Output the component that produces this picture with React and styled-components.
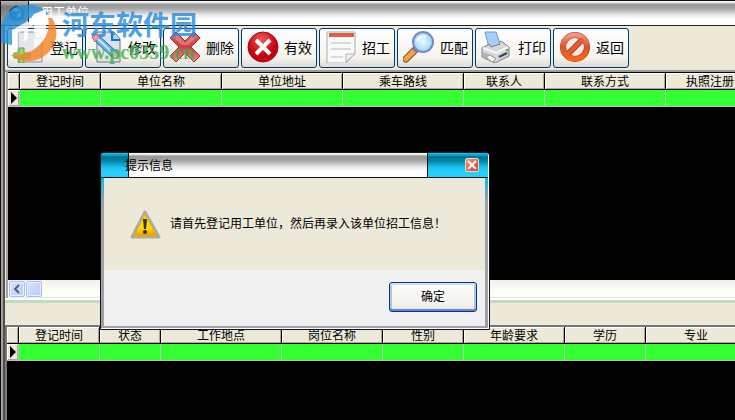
import React from "react";
import styled, { createGlobalStyle, css } from "styled-components";

const Global = createGlobalStyle`
  * { box-sizing: border-box; }
  body {
    margin: 0;
    background: #000;
    color: #000;
    font: 12px/16px "Noto Sans CJK SC", sans-serif;
  }
  button { font: inherit; color: inherit; padding: 0; margin: 0; }
`;

const chrome = "linear-gradient(#fff 0, #ddd 2px, #999 3px, #a0a0a0 7px, #e8e8e8 14px, #fff 18px, #fff 100%)";
const aqua = "linear-gradient(#00cfff 0, #00a8d0 2px, #00708e 4px, #0087aa 8px, #20c4f4 15px, #24d0ff 19px, #24d0ff 100%)";

const Window = styled.div`
  position: relative;
  display: flex;
  flex-direction: column;
  min-height: 100vh;
  overflow: hidden;
  border-top: 1px solid #110b10;
  border-left: 1px solid #110b10;
`;

const TitleBar = styled.header`
  display: flex;
  flex: none;
  height: 25px;
  background: ${chrome};
  border-bottom: 1px solid #222;
`;

const AppIcon = styled.div`
  display: flex;
  align-items: center;
  justify-content: flex-end;
  width: 28px;
  padding-right: 3px;
  background: linear-gradient(#bbb, #777 6px, #aaa);
  border-right: 1px solid #111;
`;

const WindowTitle = styled.h1`
  margin: 0;
  padding: 3px 0 0 12px;
  color: #fff;
  font-size: 12px;
  font-weight: 400;
`;

const Body = styled.div`
  display: flex;
  flex: 1;
  flex-direction: column;
  min-width: 0;
  border-left: 4px ridge #a6a2a0;
  background: #ece9d8;
`;

const Toolbar = styled.nav`
  display: flex;
  flex: none;
  gap: 2px;
  height: 46px;
  padding: 2px 2px;
  border-bottom: 2px solid #9c9a98;
  overflow: hidden;
`;

const ToolButton = styled.button`
  display: flex;
  flex: none;
  align-items: center;
  gap: 5px;
  width: 76px;
  height: 40px;
  padding: 0 0 2px 5px;
  border: 1px solid #003c74;
  border-radius: 3px;
  background: linear-gradient(#fff, #f4f3ee 75%, #dedbd0);
  font-size: 14px;
  white-space: nowrap;

  svg { width: 32px; height: 32px; flex: none; }
`;

const Pane = styled.section`
  display: flex;
  flex-direction: column;
  overflow: hidden;
  background: #000;
  ${(p) => p.$upper
    ? css`flex: none; height: 226px; padding-top: 1px; border-left: 2px solid #a6a2a0; margin-left: 1px;`
    : css`flex: 1; border-top: 2px solid #77747a; border-left: 2px solid #777;`}
`;

const Grid = styled.table`
  flex: none;
  width: ${(p) => p.$width}px;
  table-layout: fixed;
  border-collapse: separate;
  border-spacing: 0;

  th {
    height: 17px;
    padding: 0;
    overflow: hidden;
    background: #ece9d8;
    border-right: 1px solid #000;
    border-bottom: 1px solid #000;
    box-shadow: inset 1px 1px #fff, inset -1px -1px #aca899;
    font-weight: 400;
    line-height: 16px;
    white-space: nowrap;
  }

  td {
    height: 17px;
    padding: 0;
    background: #33ff33;
    border-right: 1px solid #c0c0c0;
    border-bottom: 1px solid #c0c0c0;
  }

  td:first-child {
    background: #ece9d8;
    box-shadow: inset 1px 1px #fff, inset -1px -1px #aca899;
  }
`;

const RowMarker = styled.svg`
  display: block;
  width: 6px;
  height: 12px;
  margin-left: 3px;
`;

const ScrollBar = styled.div`
  display: flex;
  flex: none;
  gap: 1px;
  height: 18px;
  margin-top: auto;
  padding: 1px;
  background: linear-gradient(#f2f0eb, #fefefb 65%, #fff 90%, #ddd);
`;

const ScrollPart = styled.button`
  display: grid;
  place-items: center;
  width: 16px;
  height: 16px;
  border: 1px solid #a9c0ef;
  border-radius: 2px;
  background: linear-gradient(135deg, #d6e2ff, #b8ccf9);
  box-shadow: inset 0 0 0 1px #e6edff;
`;

const Splitter = styled.div`
  flex: none;
  height: 27px;
  border-top: 2px solid #fff;
  background: linear-gradient(#c0dcc0 3px, #ece9d8 3px);
`;

const Dialog = styled.section`
  position: absolute;
  top: 152px;
  left: 100px;
  width: 388px;
  border-radius: 2px 2px 0 0;
  background: linear-gradient(#00cfff 0, #00bfe8 24px, #a0a0a6 50px, #a0a0a6 100%);
  border-right: 1px solid #fff;
  border-bottom: 1px solid #fff;
  outline: 1px solid #16131a;
`;

const DialogTitle = styled.header`
  display: flex;
  height: 25px;
  border-bottom: 1px solid #111;
  background: ${aqua};

  h2 {
    flex: 1;
    margin: 0 0 0 27px;
    border: solid #111;
    border-width: 0 1px;
    background: ${chrome};
    font-size: 12px;
    font-weight: 400;
    line-height: 24px;
    text-indent: -4px;
  }
`;

const CloseArea = styled.div`
  display: flex;
  align-items: center;
  justify-content: flex-end;
  width: 60px;
  padding-right: 9px;
`;

const CloseButton = styled.button`
  display: grid;
  place-items: center;
  width: 14px;
  height: 14px;
  border: 1px solid #f5d7cc;
  border-radius: 2px;
  background: linear-gradient(135deg, #f09478, #d93c18);
`;

const Message = styled.div`
  display: flex;
  align-items: center;
  gap: 9px;
  height: 92px;
  margin: 0 3px;
  padding-left: 26px;
  background: #ece9d8;

  svg { width: 31px; height: 30px; flex: none; }
  p { margin: 0; line-height: 20px; padding-bottom: 2px; }
`;

const Actions = styled.footer`
  display: flex;
  justify-content: flex-end;
  height: 56px;
  margin: 0 3px 2px;
  padding: 12px 8px 14px;
  background: #f0f0f0;
`;

const OkButton = styled.button`
  width: 88px;
  height: 30px;
  padding-bottom: 2px;
  border: 1px solid #003c74;
  border-radius: 3px;
  background: linear-gradient(#fdfdfc, #f3f3ef 70%, #eae8e0);
  box-shadow: inset 0 2px #cee0fb, inset 0 -2px #6982ee, inset 2px 0 #a9c2f0, inset -2px 0 #a9c2f0;
`;

const Watermark = styled.aside`
  position: absolute;
  top: 4px;
  left: 0;
  display: flex;
  gap: 4px;
  pointer-events: none;
  opacity: 0.8;

  svg { width: 57px; height: 57px; }
`;

const MarkText = styled.div`
  display: flex;
  flex-direction: column;
  color: #258bdc;
  font-size: 27px;
  font-weight: 700;
  line-height: 32px;
  padding-top: 3px;
  white-space: nowrap;

  span {
    color: #3fae49;
    font: bold 20px/24px "Liberation Serif", serif;
  }
`;

const Page = () => (
  <>
    <path d="M5 1h17l7 6v24H5z" fill="#e4e6e9" stroke="#89919b" />
    <path d="M22 1v6h7" fill="#fff" stroke="#2e7cc4" />
  </>
);

const icons = {
  add: (
    <>
      <Page />
      <path d="M6 17h5v5h6v5h-6v5H6v-5H1v-5h5z" fill="#9cd66d" stroke="#5ba234" />
    </>
  ),
  edit: (
    <>
      <path d="M6 1h17l6 7v23H6z" fill="#dfe2e6" stroke="#69727e" />
      <path d="M21 1v8h8" fill="#a8daff" stroke="#1676c5" strokeWidth="2" />
      <path d="M2 8l5-4 20 18v5l-6-1z" fill="#68b3ee" stroke="#2165a5" />
      <path d="M1 6q0-3 4-3l4 3-5 5z" fill="#ef9e9e" stroke="#b75b63" />
      <path d="M21 26l5-4 2 6z" fill="#f4c06c" />
      <path d="M7 8l16 15" stroke="#c4e7ff" strokeWidth="2" />
    </>
  ),
  remove: (
    <>
      <path d="M7 1l9 9 9-9 6 6-9 9 9 9-6 6-9-9-9 9-6-6 9-9-9-9z" fill="url(#rose)" stroke="#a82c36" strokeLinejoin="round" />
      <path d="M7 3l9 9 9-9 3 3-9 8H13L4 6z" fill="#fff" opacity=".25" />
    </>
  ),
  valid: (
    <>
      <circle cx="16" cy="16" r="15" fill="url(#red)" stroke="#a40712" />
      <path d="M9 9l14 14M23 9L9 23" stroke="#fff" strokeWidth="4" />
    </>
  ),
  recruit: (
    <>
      <path d="M2 1h28v22l-9 9H2z" fill="#fafafa" stroke="#aaada8" />
      <path d="M4 2h25v4H4z" fill="#e2603c" />
      <path d="M6 12h20M6 18h20M6 26h12" stroke="#b9bbbd" />
      <path d="M21 31v-8h9z" fill="#eef1f4" stroke="#b0b4b8" />
    </>
  ),
  match: (
    <>
      <path d="M3 28l11-11" stroke="#7d4e23" strokeWidth="7" strokeLinecap="round" />
      <path d="M3 28l8-8" stroke="#f5a446" strokeWidth="5" strokeLinecap="round" />
      <path d="M11 20l3-3" stroke="#7581a6" strokeWidth="5" />
      <circle cx="20" cy="11" r="10" fill="url(#lens)" stroke="#7a88c4" strokeWidth="2" />
      <path d="M14 10q3-6 9-4" fill="none" stroke="#fff" strokeWidth="3" opacity=".8" />
    </>
  ),
  print: (
    <>
      <path d="M4 1h11l4 12-11 4z" fill="#a7cdfb" stroke="#7597cd" />
      <path d="M1 17l7-4 2 3 9-3-1-2 2-1 8 6v9l-14 7L1 26z" fill="#d5d7da" stroke="#777d86" />
      <path d="M2 17l13 5 12-6" fill="none" stroke="#f8f8f8" strokeWidth="2" />
      <path d="M2 21l12 5v5L2 26z" fill="#b2b5b9" />
      <path d="M5 26l4-2 6 4-4 3z" fill="#fff" stroke="#999" />
      <path d="M18 26l8-4" stroke="#41464d" strokeWidth="2" />
      <path d="M25 19h2" stroke="#50c040" strokeWidth="2" />
    </>
  ),
  back: (
    <>
      <circle cx="16" cy="16" r="12" fill="#eeeae6" stroke="#b63416" strokeWidth="6" />
      <path d="M8 24L24 8" stroke="#b63416" strokeWidth="6" />
      <circle cx="16" cy="16" r="12" fill="none" stroke="url(#orange)" strokeWidth="5" />
      <path d="M8 24L24 8" stroke="#e65b31" strokeWidth="4" />
    </>
  ),
};

const tools = [
  ["add", "登记"], ["edit", "修改"], ["remove", "删除"], ["valid", "有效"],
  ["recruit", "招工"], ["match", "匹配"], ["print", "打印"], ["back", "返回"],
];

const employerColumns = [
  ["登记时间", 81], ["单位名称", 121], ["单位地址", 121], ["乘车路线", 121],
  ["联系人", 81], ["联系方式", 121], ["执照注册号", 101],
];

const jobColumns = [
  ["登记时间", 81], ["状态", 61], ["工作地点", 121], ["岗位名称", 101],
  ["性别", 81], ["年龄要求", 101], ["学历", 81], ["专业", 101],
];

function DataGrid({ columns }) {
  const width = columns.reduce((sum, c) => sum + c[1], 12);
  return (
    <Grid $width={width}>
      <colgroup>
        <col width="12" />
        {columns.map(([name, w]) => <col key={name} width={w} />)}
      </colgroup>
      <thead>
        <tr>
          <th aria-label="当前行" />
          {columns.map(([name]) => <th key={name} scope="col">{name}</th>)}
        </tr>
      </thead>
      <tbody>
        <tr>
          <td><RowMarker viewBox="0 0 6 12"><path d="M0 0l6 6-6 6z" /></RowMarker></td>
          {columns.map(([name]) => <td key={name} />)}
        </tr>
      </tbody>
    </Grid>
  );
}

const Defs = styled.svg`
  position: absolute;
  width: 0;
  height: 0;
`;

export default function App() {
  return (
    <Window>
      <Global />
      <Defs aria-hidden="true">
        <defs>
          <radialGradient id="red" cx=".45" cy=".25"><stop stopColor="#f35a55" /><stop offset="1" stopColor="#c30513" /></radialGradient>
          <linearGradient id="rose" x2="0" y2="1"><stop stopColor="#e45a5e" /><stop offset=".5" stopColor="#cf4046" /><stop offset="1" stopColor="#f28a84" /></linearGradient>
          <radialGradient id="lens"><stop stopColor="#e9ffff" /><stop offset="1" stopColor="#98d4fa" /></radialGradient>
          <linearGradient id="orange" x2="0" y2="1"><stop stopColor="#ed9982" /><stop offset=".5" stopColor="#df532b" /><stop offset="1" stopColor="#fb661b" /></linearGradient>
          <linearGradient id="gold" x2="0" y2="1"><stop stopColor="#f5c800" /><stop offset=".6" stopColor="#ffdc12" /><stop offset="1" stopColor="#e89b00" /></linearGradient>
        </defs>
      </Defs>
      <TitleBar>
        <AppIcon>
          <svg width="16" height="16" viewBox="0 0 16 16">
            <path d="M1 5l6-4 7 3v9l-7 3-6-3z" fill="#256f94" stroke="#123a50" />
            <path d="M3 5l4-2 5 2-5 2zM8 9l4-2v4l-4 2z" fill="#a2d2df" />
          </svg>
        </AppIcon>
        <WindowTitle>用工单位</WindowTitle>
      </TitleBar>
      <Body>
        <Toolbar>
          {tools.map(([icon, label]) => (
            <ToolButton key={icon} type="button">
              <svg viewBox="0 0 32 32" aria-hidden="true">{icons[icon]}</svg>
              {label}
            </ToolButton>
          ))}
        </Toolbar>
        <Pane $upper>
          <DataGrid columns={employerColumns} />
          <ScrollBar>
            <ScrollPart type="button" aria-label="向左滚动">
              <svg width="8" height="10" viewBox="0 0 8 10"><path d="M6 1L2 5l4 4" fill="none" stroke="#4d6185" strokeWidth="2" /></svg>
            </ScrollPart>
            <ScrollPart type="button" aria-label="滚动滑块" />
          </ScrollBar>
        </Pane>
        <Splitter />
        <Pane>
          <DataGrid columns={jobColumns} />
        </Pane>
      </Body>
      <Dialog role="alertdialog" aria-labelledby="dialog-title">
        <DialogTitle>
          <h2 id="dialog-title">提示信息</h2>
          <CloseArea>
            <CloseButton type="button" aria-label="关闭">
              <svg width="10" height="10" viewBox="0 0 10 10"><path d="M1 1l8 8M9 1L1 9" stroke="#fff" strokeWidth="2" /></svg>
            </CloseButton>
          </CloseArea>
        </DialogTitle>
        <Message>
          <svg viewBox="0 0 31 30" aria-hidden="true">
            <path d="M15 3L2 28h27z" fill="#aaa" stroke="#aaa" strokeWidth="3" strokeLinejoin="round" />
            <path d="M15 5L4 27h23z" fill="url(#gold)" stroke="#e2b400" strokeLinejoin="round" />
            <path d="M13 10h4l-1 10h-2z" fill="#3a300c" />
            <circle cx="15" cy="23" r="2" fill="#3a300c" />
          </svg>
          <p>请首先登记用工单位，然后再录入该单位招工信息！</p>
        </Message>
        <Actions><OkButton type="button">确定</OkButton></Actions>
      </Dialog>
      <Watermark>
        <svg viewBox="0 0 57 57" aria-hidden="true">
          <path d="M1 38A28 28 0 0 1 48 9Q38 12 33 20V12l-8 3v8l-10 5v13z" fill="#2894dc" />
          <path d="M51 13A28 28 0 0 1 10 50q22 0 32-14 8-12 5-23z" fill="#f58220" />
          <path d="M11 25l16-9v14q0 5-4 7v-12l-6 3v17l-6-3zM33 9l12-5v26q-3 8-12 13V20l-7 4v-5z" fill="#fff" />
        </svg>
        <MarkText>河东软件园<span>www.pc0359.cn</span></MarkText>
      </Watermark>
    </Window>
  );
}
